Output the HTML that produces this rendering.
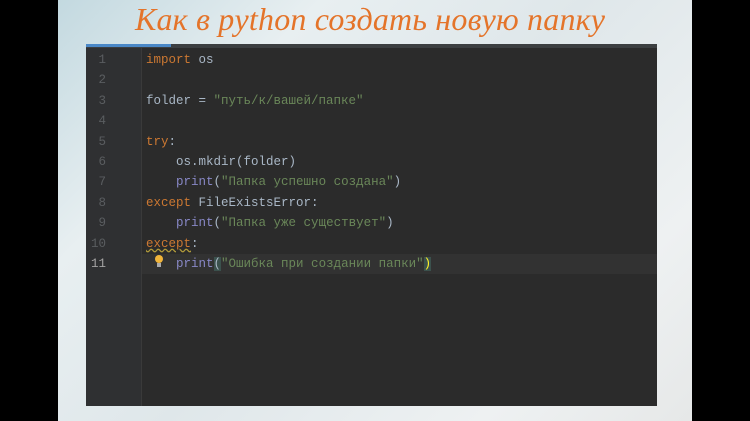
<!DOCTYPE html>
<html><head><meta charset="utf-8"><style>
body{margin:0;width:750px;height:421px;background:#000;position:relative;overflow:hidden}
.slide{position:absolute;left:58px;top:0;width:634px;height:421px;background:linear-gradient(135deg,#c3d9e0 0%,#e8eff1 25%,#dfe7ea 50%,#eef1f2 80%,#e6e8e8 100%)}
.title{position:absolute;left:135px;top:1px;font-family:"Liberation Serif",serif;font-style:italic;font-size:32px;color:#e4742a;white-space:nowrap;letter-spacing:0.2px}
.ed{position:absolute;left:86px;top:44px;width:571px;height:362px;background:#2b2b2b}
.gut{position:absolute;left:0;top:4px;width:55px;bottom:0;background:#2f3032;border-right:1px solid #3a3a3a}
.tab{position:absolute;left:0;top:0;width:571px;height:4px;background:#3c3f41}
.tab i{position:absolute;left:0;top:0;width:85px;height:3px;background:#4a88c7}
.cur{position:absolute;left:56px;top:210px;right:0;height:20px;background:#323232}
.ln,.cd{position:absolute;font-family:"Liberation Mono","DejaVu Sans Mono",monospace;font-size:12.5px;white-space:pre;line-height:20.4px}
.ln{left:0;width:22px;text-align:right;color:#5a5d60}
.cd{left:60px;color:#a9b7c6}
.k{color:#cc7832}.s{color:#6a8759}.f{color:#8888c6}
</style></head><body>
<div class="slide"></div>
<div class="title">Как в python создать новую папку</div>
<div class="ed">
<div class="tab"><i></i></div>
<div class="gut"></div>
<div class="cur"></div>
<div class="ln" style="top:6px;left:-2px">1
2
3
4
5
6
7
8
9
10
<span style="color:#a4a3a3">11</span></div>
<div class="cd" style="top:6px"><span class="k">import</span> os

folder = <span class="s">"путь/к/вашей/папке"</span>

<span class="k">try</span>:
    os.mkdir(folder)
    <span class="f">print</span>(<span class="s">"Папка успешно создана"</span>)
<span class="k">except</span> FileExistsError:
    <span class="f">print</span>(<span class="s">"Папка уже существует"</span>)
<span class="k" style="text-decoration:underline wavy #b09a3a">except</span>:
    <span class="f">print</span><span style="background:#3b514d">(</span><span class="s">"Ошибка при создании папки"</span><span style="background:#3b514d;color:#ffef28">)</span></div>
<div style="position:absolute;left:69px;top:211px;width:8px;height:8px;border-radius:50%;background:#f0b43a"></div>
<div style="position:absolute;left:71px;top:219px;width:4px;height:4px;background:#aaa"></div>
</div>
</body></html>
